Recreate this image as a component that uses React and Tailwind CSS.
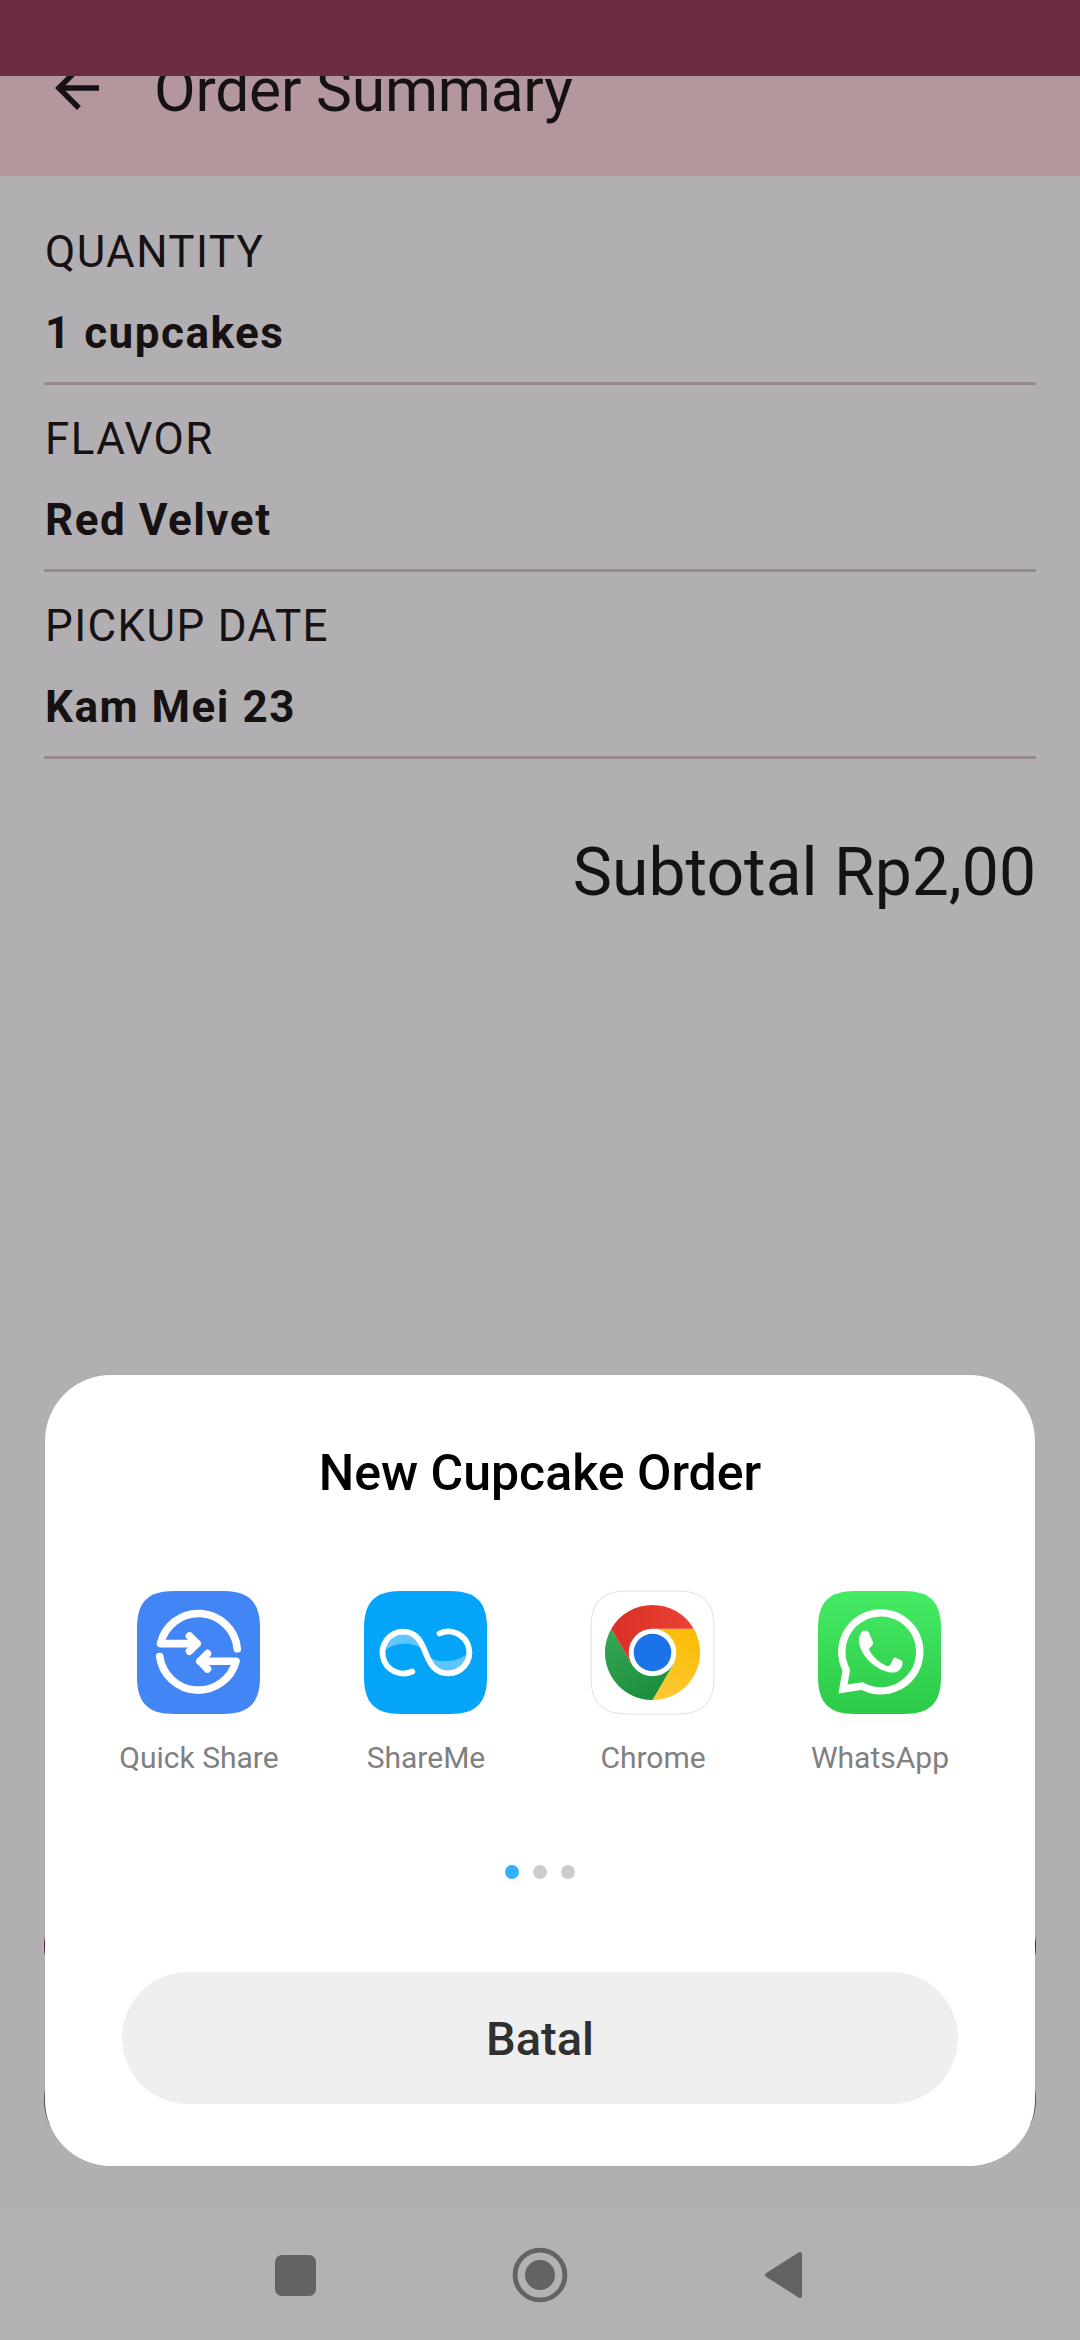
import React from "react";

const details = [
  { label: "QUANTITY", value: "1 cupcakes" },
  { label: "FLAVOR", value: "Red Velvet" },
  { label: "PICKUP DATE", value: "Kam Mei 23" },
];

const TILE = "M37 0H86C112 0 123 11 123 37V86C123 112 112 123 86 123H37C11 123 0 112 0 86V37C0 11 11 0 37 0Z";

function QuickShareIcon() {
  return (
    <svg className="h-[123px] w-[123px]" viewBox="0 0 123 123" fill="none">
      <path d={TILE} fill="#4285f4" />
      <g stroke="#fff" strokeWidth="7.6" strokeLinecap="round" strokeLinejoin="round">
        <path d="M100.300 57.800A39 39 0 0 0 23.500 52.600H60" />
        <path d="M52.500 45L60 52.600L52.500 60.200" />
        <path d="M22.700 65.500A39 39 0 0 0 99 70.200H63" />
        <path d="M70.500 62.600L63 70.200L70.500 78" />
      </g>
    </svg>
  );
}

function ShareMeIcon() {
  return (
    <svg className="h-[123px] w-[123px]" viewBox="0 0 123 123" fill="none">
      <path d={TILE} fill="#04a5f8" />
      <path d="M19 62C20 48 28 41 38 41C50 41 56 49 60 59C52 53 44 52 37 53C28 54 21 58 19 62Z" fill="#61c4fb" />
      <path d="M104 61C103 75 95 82.500 85 82.500C73 82.500 67 76 64 65C71 70 78 71 85 70C93 69 101 66 104 61Z" fill="#61c4fb" />
      <path d="M48.300 80.500A20.900 20.900 0 1 1 38.500 40.700C52 40.700 57 50 61.500 61.500C66 73.500 71.500 82.300 84.500 82.300A20.900 20.900 0 1 0 75.500 42.500" stroke="#fff" strokeWidth="5.800" strokeLinecap="round" />
    </svg>
  );
}

function ChromeIcon() {
  return (
    <svg className="h-[123px] w-[123px] overflow-visible" viewBox="0 0 123 123">
      <defs>
        <linearGradient id="chromeRed" x1="0" x2="1"><stop stopColor="#d93025" /><stop offset="1" stopColor="#ea4335" /></linearGradient>
        <linearGradient id="chromeGreen" x1="0" y1="0" x2="0.6" y2="1"><stop stopColor="#34a853" /><stop offset="1" stopColor="#1e8e3e" /></linearGradient>
        <linearGradient id="chromeYellow" x1="0.6" y1="0" x2="0.3" y2="1"><stop stopColor="#fbbc04" /><stop offset="1" stopColor="#fcc934" /></linearGradient>
      </defs>
      <path d={TILE} fill="#fff" stroke="#dcdcdc" strokeWidth="0.900" />
      <path d="M61.500 37.700H102.700A47.600 47.600 0 0 1 61.500 109.100L82.100 73.400Z" fill="url(#chromeYellow)" />
      <path d="M82.100 73.400L61.500 109.100A47.600 47.600 0 0 1 20.300 37.700L40.900 73.400L61.500 80Z" fill="url(#chromeGreen)" />
      <path d="M20.300 37.700A47.600 47.600 0 0 1 102.700 37.700H61.500L40.900 73.400Z" fill="url(#chromeRed)" />
      <circle cx="61.500" cy="61.500" r="23.800" fill="#fff" />
      <circle cx="61.500" cy="61.500" r="18.800" fill="#1a73e8" />
    </svg>
  );
}

function WhatsAppIcon() {
  return (
    <svg className="h-[123px] w-[123px]" viewBox="0 0 123 123" fill="none">
      <defs>
        <linearGradient id="waGreen" x1="0" y1="0" x2="0" y2="1"><stop stopColor="#46eb64" /><stop offset="1" stopColor="#2bca47" /></linearGradient>
      </defs>
      <path d={TILE} fill="url(#waGreen)" />
      <path d="M25 98L28.300 79A39 39 0 1 1 44 95Z" stroke="#fff" strokeWidth="7.400" />
      <path d="M45 40C48 39.500 50 39.500 51 42L55 51C56 53 53 55.500 51.500 57.500C51 58.500 51 59 52 60.500C57 68 62 72 69 75C70.500 75.500 71 75 72 74C74 71.500 75 65.500 77.500 66.500L83.500 69.500C85 70.500 84.800 73 84 75C82 80 78 82 73 81.500C65 80.500 57 76 50 69C45 63 42 58 41 51C40.500 46 42 42 45 40Z" fill="#fff" />
    </svg>
  );
}

const apps = [
  { name: "Quick Share", Icon: QuickShareIcon },
  { name: "ShareMe", Icon: ShareMeIcon },
  { name: "Chrome", Icon: ChromeIcon },
  { name: "WhatsApp", Icon: WhatsAppIcon },
];

function ShareSheet() {
  return (
    <section className="absolute top-[1375px] left-[45px] flex h-[791px] w-[990px] flex-col items-center rounded-[66px] bg-white">
      <h2 className="mt-[69px] text-[50px] leading-[58px] font-medium text-black">New Cupcake Order</h2>
      <div className="mt-[89px] mr-[2px] grid w-[908px] grid-cols-4">
        {apps.map(({ name, Icon }) => (
          <div key={name} className="flex flex-col items-center">
            <Icon />
            <span className="mt-[26px] pl-px text-[30px] leading-[35px] text-[#808080]">{name}</span>
          </div>
        ))}
      </div>
      <div className="mt-[90px] flex gap-[14px]">
        <i className="size-[14px] rounded-full bg-[#33b1ff]" />
        <i className="size-[14px] rounded-full bg-[#cccccc]" />
        <i className="size-[14px] rounded-full bg-[#cccccc]" />
      </div>
      <button className="mt-[93px] h-[132px] w-[836px] rounded-full bg-[#efefef] pt-[2px] text-[47px] font-medium text-[#303030]">Batal</button>
    </section>
  );
}

export default function App() {
  return (
    <div className="relative flex h-[2340px] w-[1080px] flex-col overflow-hidden bg-[#b2afb2] font-['Roboto',sans-serif] text-[#161213]">
      <header className="relative flex h-[176px] shrink-0 items-center bg-[#b4979d] pl-[44px]">
        <svg className="size-[66px]" viewBox="0 0 24 24" fill="currentColor">
          <path d="M20 11H7.830l5.590-5.590L12 4l-8 8 8 8 1.410-1.410L7.830 13H20v-2z" />
        </svg>
        <h1 className="ml-[44px] pt-[5px] text-[60.5px] leading-[77px] tracking-[-0.2px]">Order Summary</h1>
        <div className="absolute inset-x-0 top-0 h-[76px] bg-[#6b2c44]" />
      </header>
      <main className="flex grow flex-col px-[44px] pt-[43px]">
        {details.map((d) => (
          <div key={d.label} className="flex h-[187px] flex-col text-[44px] leading-[66px]">
            <span className="pl-px tracking-[1.375px]">{d.label}</span>
            <span className="mt-[15px] pl-px font-bold tracking-[1.5px]">{d.value}</span>
            <hr className="mt-[16px] h-[3px] border-0 bg-[#97898d]" />
          </div>
        ))}
        <p className="mt-[49px] text-right text-[66px] leading-[88px]">Subtotal Rp2,00</p>
        <div className="mt-auto mb-[55px] flex flex-col gap-[44px]">
          <div className="h-[110px] rounded-full bg-[#5f1e3b]" />
          <div className="h-[110px] rounded-full border-[3px] border-[#595055]" />
        </div>
      </main>
      <nav className="flex h-[130px] shrink-0 items-center bg-[#b2b2b2] pl-[275px] text-[#636363]">
        <div className="size-[41px] rounded-[7px] bg-current" />
        <svg className="ml-[196px] size-[56px]" viewBox="0 0 56 56" fill="none">
          <circle cx="28" cy="28" r="24.900" stroke="currentColor" strokeWidth="4.800" />
          <circle cx="28" cy="28" r="15" fill="currentColor" />
        </svg>
        <svg className="ml-[196px] h-[48px] w-[40px]" viewBox="0 0 40 48">
          <path d="M3 24L36 3V45Z" fill="currentColor" stroke="currentColor" strokeWidth="4" strokeLinejoin="round" />
        </svg>
      </nav>
      <ShareSheet />
    </div>
  );
}
